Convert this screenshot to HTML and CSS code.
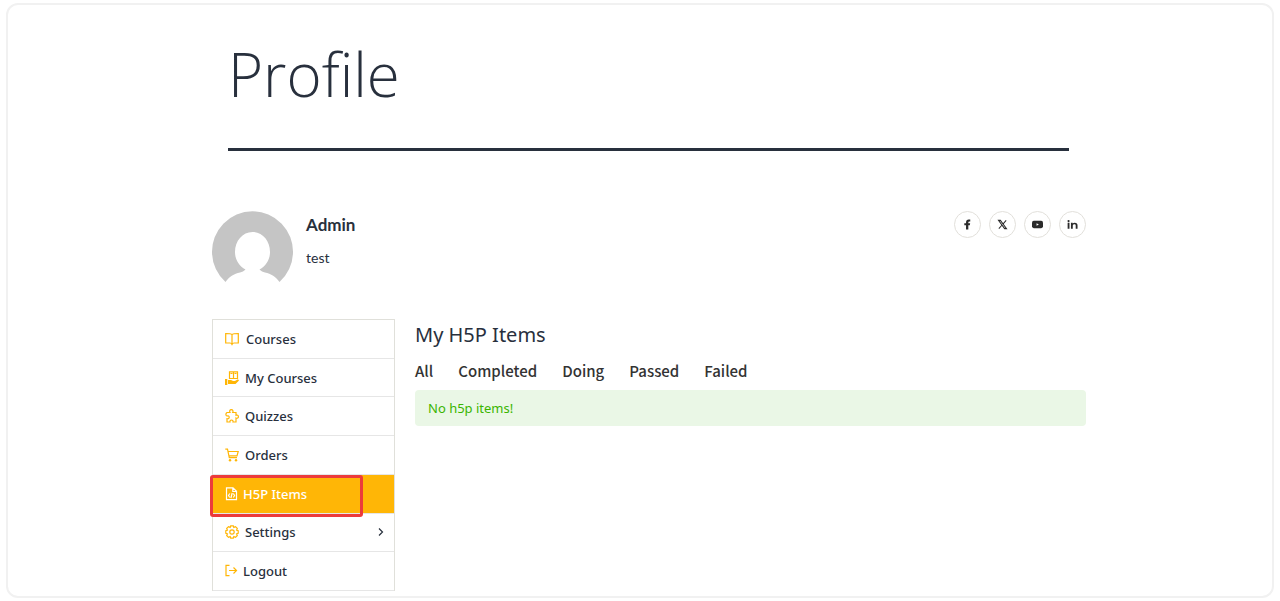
FILE: index.html
```html
<!DOCTYPE html>
<html lang="en">
<head>
    <meta charset="UTF-8">
    <meta name="viewport" content="width=device-width, initial-scale=1">
    <title>Profile</title>
    <link rel="stylesheet" href="styles.css">
</head>
<body>
    <div class="page">
        <header class="page-header">
            <h1>Profile</h1>
        </header>
        <main class="profile">
            <div class="user-row">
                <svg class="avatar" viewBox="0 0 81 81" aria-hidden="true">
                    <path fill="#c5c5c5" d="M13.500 71.000A40.500 40.500 0 1 1 67.500 71.000C64 66 59 62.500 53 61.500C51 61 49 60 47.500 58.500C54 55 58 48.500 58 41C58 30 50.500 21 40.500 21S23 30 23 41C23 48.500 27 55 33.500 58.500C32 60 30 61 28 61.500C22 62.500 17 66 13.500 71Z"/>
                </svg>
                <div class="user-info">
                    <h2>Admin</h2>
                    <p>test</p>
                </div>
                <ul class="socials">
                    <li><a href="#" aria-label="Facebook">
                        <svg viewBox="0 0 12 12"><path fill="#2b2b2b" d="M4.400 11.500V6.900H2.500V4.700H4.400V3.700C4.400 1.700 5.400 .5 7.300 .5H9V2.700H7.900C7.200 2.700 6.900 3 6.900 3.700V4.700H8.900L8.500 6.900H6.900V11.500Z"/></svg>
                    </a></li>
                    <li><a href="#" aria-label="X">
                        <svg viewBox="0 0 12 12"><path fill="none" stroke="#2b2b2b" stroke-width="1.100" d="M1.600 1.500H3.700L10.400 10.500H8.300ZM10 1.500L6.700 5.300M5.300 6.800L2 10.500"/></svg>
                    </a></li>
                    <li><a href="#" aria-label="YouTube">
                        <svg viewBox="0 0 12 12"><rect x="0" y="2" width="12" height="8" rx="2" fill="#2b2b2b"/><path fill="#fff" d="M5 4.600L7.500 6L5 7.400Z"/></svg>
                    </a></li>
                    <li><a href="#" aria-label="LinkedIn">
                        <svg viewBox="0 0 12 12"><circle cx="1.700" cy="2.300" r="1.200" fill="#2b2b2b"/><path fill="#2b2b2b" d="M.7 4.200H2.700V10.500H.7ZM4.300 4.200H6.200V5C6.700 4.300 7.400 4 8.400 4C10.500 4 11.500 5.100 11.500 7V10.500H9.500V7.200C9.500 6.200 9 5.700 8.100 5.700C6.900 5.700 6.300 6.300 6.300 7.400V10.500H4.300Z"/></svg>
                    </a></li>
                </ul>
            </div>
            <div class="columns">
                <nav class="menu" aria-label="Profile">
                    <ul>
                        <li><a href="#">
                            <svg class="gap-wide" viewBox="0 0 14 14"><path d="M7 2.500C6 1.500 4.500 1.500 .7 1.500V11H5C6 11 6.500 11.500 7 12.500C7.500 11.500 8 11 9 11H13.300V1.500C9.500 1.500 8 1.500 7 2.500ZM7 2.500V12"/></svg>
                            Courses
                        </a></li>
                        <li><a href="#">
                            <svg viewBox="0 0 14 14"><path d="M4.500 .8H12.500V7.500H4.500ZM8.500 .8V7.500M5.500 2.500H7.500M9.500 2.500H11.500"/><path class="solid" d="M0 8H2.300V14H0ZM3 9H6L8 10H10L13 8.300L14 9.500L10.500 13H3Z"/></svg>
                            My Courses
                        </a></li>
                        <li><a href="#">
                            <svg viewBox="0 0 14 14"><path d="M2 3.500H5C4.200 2 4.800 .7 6.300 .7S8.500 2 7.700 3.500H11V6.300C12.300 5.700 13.400 6.400 13.400 7.700S12.300 9.600 11 9V13H8C8.300 11.700 7.700 11 6.500 11S4.700 11.700 5 13H2V9.700C3.500 10 4.200 9.300 4.200 8.200S3.500 6.500 2 7C.5 6.500 .5 4.500 2 3.500Z"/></svg>
                            Quizzes
                        </a></li>
                        <li><a href="#">
                            <svg viewBox="0 0 14 14"><path d="M.3 1.200H2.500L4.300 9.700H12M3 3.500H13.200L12 7.800H4"/><circle class="solid" cx="5" cy="12.300" r="1.200"/><circle class="solid" cx="11" cy="12.300" r="1.200"/></svg>
                            Orders
                        </a></li>
                        <li class="active"><a href="#">
                            <svg class="gap-narrow" viewBox="0 0 14 14"><path d="M1.500 .8H8L11.500 4.300V12.700H1.500ZM7.800 .8V4.500H11.500M4.800 6.500L3.500 8.500L4.800 10.500M8.300 6.500L9.600 8.500L8.300 10.500M7.200 6L5.900 11"/></svg>
                            H5P Items
                        </a></li>
                        <li><a href="#">
                            <svg viewBox="0 0 14 14"><path d="M5.700 .8H8.300L8.800 2.400L10.500 1.700L12.300 3.500L11.600 5.200L13.200 5.700V8.300L11.600 8.800L12.300 10.500L10.500 12.300L8.800 11.600L8.300 13.200H5.700L5.200 11.600L3.500 12.300L1.700 10.500L2.400 8.800L.8 8.300V5.700L2.400 5.200L1.700 3.500L3.500 1.700L5.200 2.400Z"/><circle cx="7" cy="7" r="2.200"/></svg>
                            Settings
                            <svg class="chevron" viewBox="0 0 8 10"><path d="M2 1.500L5.500 5L2 8.500"/></svg>
                        </a></li>
                        <li><a href="#">
                            <svg class="gap-narrow" viewBox="0 0 14 14"><path d="M4.500 1.300H1V11.700H4.500M4 6.500H11.500M8.500 3.500L11.500 6.500L8.500 9.500"/></svg>
                            Logout
                        </a></li>
                    </ul>
                </nav>
                <section class="content">
                    <h3>My H5P Items</h3>
                    <ul class="filters">
                        <li><a href="#">All</a></li>
                        <li><a href="#">Completed</a></li>
                        <li><a href="#">Doing</a></li>
                        <li><a href="#">Passed</a></li>
                        <li><a href="#">Failed</a></li>
                    </ul>
                    <p class="message">No h5p items!</p>
                </section>
            </div>
        </main>
    </div>
</body>
</html>
```
FILE: styles.css
```css
*, *::after {
    box-sizing: border-box;
}

body {
    margin: 0;
    padding: 3px 6px;
    font-family: "Noto Sans", "Open Sans", sans-serif;
    color: #28303d;
    background: #fff;
}

h1, h2, h3, p, ul {
    margin: 0;
    padding: 0;
}

ul {
    list-style: none;
}

a {
    color: inherit;
    text-decoration: none;
}

.page {
    min-height: calc(100vh - 6px);
    padding: 0 186px 5px 204px;
    border: 2px solid #f1f1f1;
    border-radius: 12px;
}

.page-header {
    margin: 0 17px 60px 16px;
    padding: 25px 0 30px;
    border-bottom: 3px solid #28303d;
}

    .page-header h1 {
        font-family: "Open Sans", sans-serif;
        font-size: 60px;
        line-height: 88px;
        font-weight: 300;
    }

.user-row {
    display: flex;
    gap: 13px;
    height: 81px;
    margin-bottom: 27px;
    font-family: Lato, sans-serif;
}

.avatar {
    width: 81px;
    height: 81px;
}

.user-info {
    flex-grow: 1;
    padding-top: 4px;
}

    .user-info h2 {
        font-size: 17px;
        line-height: 20px;
        font-weight: 700;
        margin-bottom: 13px;
    }

    .user-info p {
        font-size: 14px;
        line-height: 20px;
    }

.socials {
    display: flex;
    gap: 8px;
}

    .socials a {
        display: flex;
        align-items: center;
        justify-content: center;
        width: 27px;
        height: 27px;
        border: 1px solid #e2e0db;
        border-radius: 50%;
    }

    .socials svg {
        width: 11px;
        height: 11px;
    }

.columns {
    display: flex;
    align-items: flex-start;
    gap: 20px;
}

.menu {
    flex: 0 0 183px;
    border: 1px solid #e0e0da;
    border-bottom: 0;
}

    .menu ul {
        display: flex;
        flex-direction: column;
        min-height: 271px;
    }

    .menu li {
        display: flex;
        flex: 1 0 0;
        position: relative;
        border-bottom: 1px solid #e6e6e6;
    }

    .menu a {
        display: flex;
        flex-grow: 1;
        align-items: center;
        padding: 0 9px 0 12px;
        font-size: 13px;
        font-weight: 500;
    }

    .menu svg {
        width: 14px;
        height: 14px;
        margin-right: 6px;
        fill: none;
        stroke: #ffb606;
        stroke-width: 1.2;
    }

    .menu .solid {
        fill: #ffb606;
        stroke: none;
    }

    .menu .gap-wide {
        margin-right: 7px;
    }

    .menu .gap-narrow {
        margin-right: 4px;
    }

    .menu .chevron {
        width: 8px;
        height: 10px;
        margin: 0 0 0 auto;
        stroke: #28303d;
    }

    .menu .active {
        background: #ffb606;
        color: #fff;
    }

        .menu .active svg {
            stroke: #fff;
        }

        .menu .active::after {
            content: "";
            position: absolute;
            top: 0;
            left: -3px;
            width: 153px;
            height: 42px;
            border: 3px solid #ec3b3b;
            border-radius: 3px;
            z-index: 1;
        }

.content {
    flex-grow: 1;
}

    .content h3 {
        font-size: 20px;
        line-height: 32px;
        font-weight: 400;
    }

.filters {
    display: flex;
    gap: 25px;
    padding: 9px 0 8px;
    font-family: "Noto Sans CJK SC", "Noto Sans", sans-serif;
    font-size: 15px;
    line-height: 22px;
    font-weight: 500;
    color: #333;
}

.message {
    padding: 8px 13px;
    border-radius: 4px;
    background: #eaf7e6;
    color: #3ab500;
    font-size: 13px;
    line-height: 20px;
}
```
